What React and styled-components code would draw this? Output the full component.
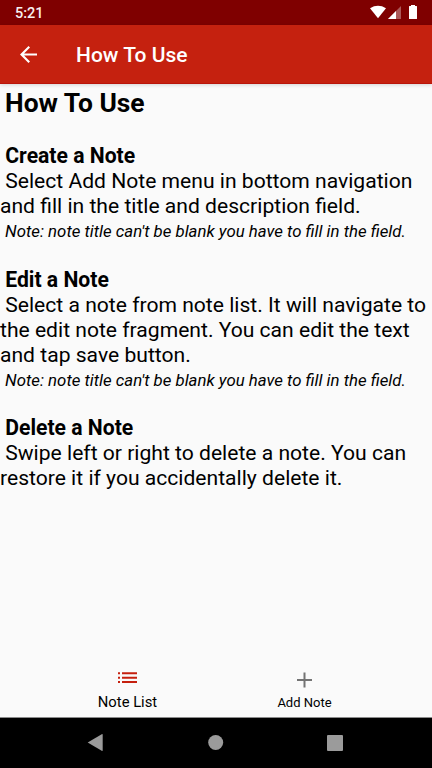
import React from 'react';
import styled, { createGlobalStyle } from 'styled-components';

const Global = createGlobalStyle`
  body { margin: 0; }
  * { box-sizing: border-box; }
`;
const Screen = styled.div`
  width: 432px; height: 768px; display: flex; flex-direction: column;
  background: #fafafa; color: #000; font-family: Roboto, sans-serif; overflow: hidden;
`;
const StatusBar = styled.header`
  height: 25px; flex: none; background: #7f0000; color: #fff; display: flex;
  align-items: center; justify-content: space-between; padding: 0 12px 0 15px;
`;
const Clock = styled.span`font-size: 14.5px; font-weight: 500; padding-top: 2px; opacity: .94;`;
const StatusIcons = styled.svg`width: 50px; height: 25px; flex: none;`;
const AppBar = styled.div`
  height: 59px; flex: none; background: #c5210f; color: #fff; display: flex; align-items: center;
  padding-left: 20px; border-bottom: 1px solid #b9150a; box-shadow: 0 1px 4px rgba(0,0,0,.16); z-index: 1;
`;
const BackIcon = styled.svg`width: 17px; height: 17px; margin-right: 39px;`;
const Title = styled.div`font-size: 21px; font-weight: 500; padding-top: 1px;`;
const Content = styled.main`flex: 1; white-space: pre;`;
const Heading = styled.h1`margin: 3px 0 0 -1.5px; font-size: 26.4px; line-height: 32px; font-weight: 700;`;
const Section = styled.section`padding-top: ${p => p.$gap}px;`;
const SectionTitle = styled.h2`margin: 0; font-size: 21.15px; line-height: 25px; font-weight: 700;`;
const Body = styled.p`margin: 0; font-size: 21.1px; line-height: 25px;`;
const Hint = styled.p`margin: 0 0 0 1px; font-size: 16.8px; line-height: 27px; font-style: italic;`;
const BottomNav = styled.nav`height: 60px; flex: none; display: flex; padding: 0 39px; border-bottom: 1px solid #8b8b8b;`;
const NavItem = styled.div`
  flex: 1; display: flex; flex-direction: column; align-items: center; padding-top: 9px;
  font-size: ${p => p.$active ? 14.8 : 13}px; line-height: 21px;
`;
const NavIcon = styled.svg`width: 25px; height: 25px; fill: ${p => p.$active ? '#c5200e' : '#737373'};`;
const SystemNav = styled.footer`height: 50px; flex: none; background: #000; display: flex;`;
const SystemIcons = styled.svg`width: 432px; height: 50px; fill: #9b9b9b;`;

export default function App() {
  return <><Global /><Screen>
    <StatusBar><Clock>5:21</Clock>
      <StatusIcons viewBox="0 0 50 25" fill="#fff">
        <path d="M0 8.200Q8 3.400 16 8.200L8 18.200Z"/>
        <path d="M18 19L31 6V19Z" opacity=".35"/><path d="M18 19L26 11V19Z"/>
        <path d="M41 5h4v1h1.500q.5 0 .5.5v12q0 .5-.5.5h-7q-.5 0-.5-.5v-12q0-.5.5-.5H41Z"/>
      </StatusIcons>
    </StatusBar>
    <AppBar><BackIcon viewBox="4 4 16 16" fill="#fff"><path d="M20 11H7.830l5.590-5.590L12 4l-8 8 8 8 1.410-1.410L7.830 13H20z"/></BackIcon><Title>How To Use</Title></AppBar>
    <Content>
      <Heading> How To Use</Heading>
      <Section $gap={24}><SectionTitle> Create a Note</SectionTitle><Body>{' Select Add Note menu in bottom navigation\nand fill in the title and description field.'}</Body><Hint>{" Note: note title can't be blank you have to fill in the field."}</Hint></Section>
      <Section $gap={22}><SectionTitle> Edit a Note</SectionTitle><Body>{' Select a note from note list. It will navigate to\nthe edit note fragment. You can edit the text\nand tap save button.'}</Body><Hint>{" Note: note title can't be blank you have to fill in the field."}</Hint></Section>
      <Section $gap={21}><SectionTitle> Delete a Note</SectionTitle><Body>{' Swipe left or right to delete a note. You can\nrestore it if you accidentally delete it.'}</Body></Section>
    </Content>
    <BottomNav>
      <NavItem $active><NavIcon $active viewBox="0 0 25 25"><path d="M3 5.300h2v1.900H3zM7 5.300h15v1.900H7zM3 9.700h2v2H3zM7 9.700h15v2H7zM3 14h2v2H3zM7 14h15v2H7z"/></NavIcon>Note List</NavItem>
      <NavItem><NavIcon viewBox="0 0 25 25"><path d="M11.500 5.500h2v6.500h6.500v2h-6.500v6.500h-2v-6.500H5v-2h6.500z"/></NavIcon>Add Note</NavItem>
    </BottomNav>
    <SystemNav><SystemIcons viewBox="0 0 432 50"><path d="M87.700 24.500L101.700 16.200q1-.5 1 .5v15.600q0 1-1 .5Z"/><circle cx="215.700" cy="24.500" r="7.500"/><rect x="327" y="17" width="16" height="16" rx="1"/></SystemIcons></SystemNav>
  </Screen></>;
}
